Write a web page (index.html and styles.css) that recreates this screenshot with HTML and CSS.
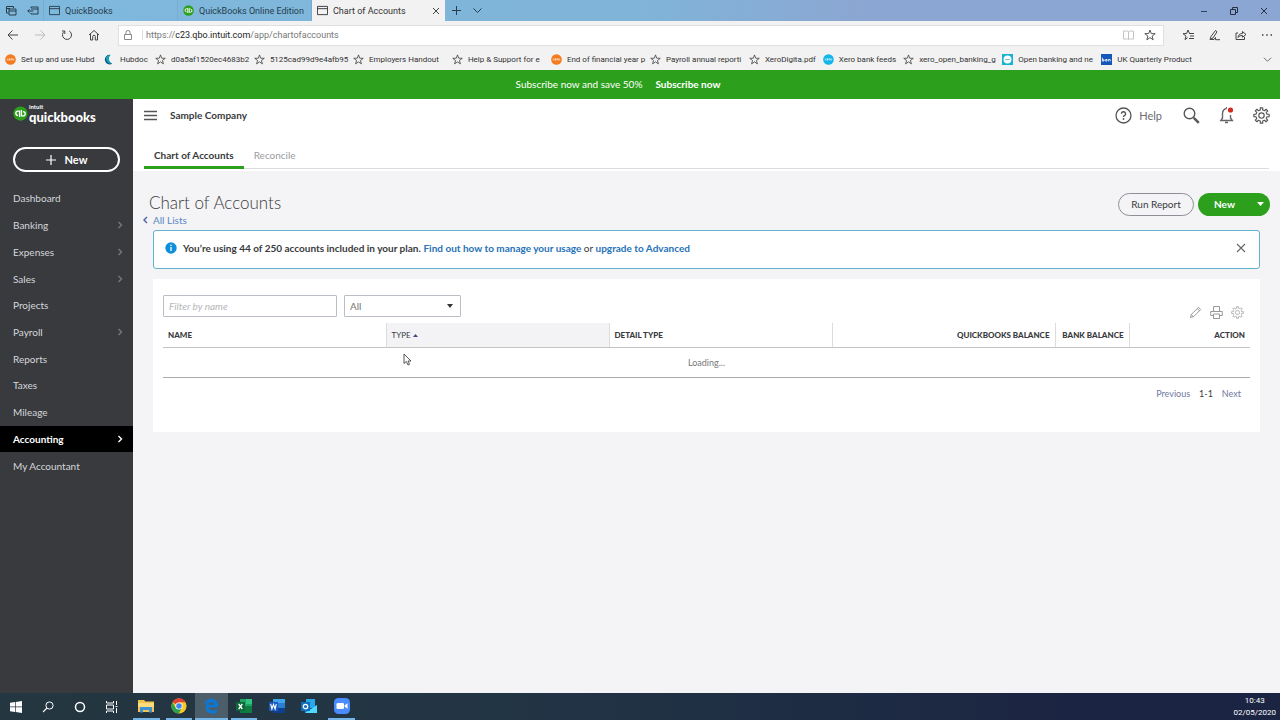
FILE: index.html
```html
<!DOCTYPE html>
<html lang="en">
<head>
    <meta charset="UTF-8">
    <title>Chart of Accounts</title>
    <link rel="stylesheet" href="styles.css">
</head>
<body>
    <!-- Shared icons -->
    <svg class="sprite" aria-hidden="true">
        <symbol id="star" viewBox="0 0 12 12"><path d="M6 1l1.3 3.6 3.9.1-3.1 2.4 1.1 3.7L6 8.6l-3.2 2.2 1.1-3.7L.8 4.7l3.9-.1z" fill="none" stroke="#444" stroke-width=".9"/></symbol>
        <symbol id="page" viewBox="0 0 12 12"><path d="M.5 1.5h11v9H.5zM.5 4h11" fill="none" stroke="currentColor"/></symbol>
        <symbol id="xero" viewBox="0 0 12 12"><circle cx="6" cy="6" r="5.8" fill="currentColor"/><path d="M2.3 5l1.4 2M3.7 5L2.3 7M4.6 6h1.6M5.6 7H4.9V5h1M7 7V5h.8M9.6 6a.8.8 0 1 1-1.6 0 .8.8 0 0 1 1.6 0" fill="none" stroke="#fff" stroke-width=".6"/></symbol>
        <symbol id="gear" viewBox="0 0 24 24"><path d="M10.3 4.2v-3h3.4v3l2.6 1.1 2.1-2.1 2.4 2.4-2.1 2.1 1.1 2.6h3v3.4h-3l-1.1 2.6 2.1 2.1-2.4 2.4-2.1-2.1-2.6 1.1v3h-3.4v-3l-2.6-1.1-2.1 2.1-2.4-2.4 2.1-2.1-1.1-2.6h-3v-3.4h3l1.1-2.6-2.1-2.1 2.4-2.4 2.1 2.1z" stroke-linejoin="round"/><circle cx="12" cy="12" r="3.8"/></symbol>
        <symbol id="chevron" viewBox="0 0 6 8"><path d="M1.5 1l3 3-3 3" fill="none" stroke="currentColor" stroke-width="1.4"/></symbol>
        <symbol id="qb" viewBox="0 0 16 16"><circle cx="8" cy="8" r="7.6" fill="#2ca01c"/><path d="M7 11.8V5.4H5.3a2.3 2.3 0 0 0 0 4.6M9 4.2v6.4h1.7a2.3 2.3 0 0 0 0-4.6" fill="none" stroke="#fff" stroke-width="1.4"/></symbol>
    </svg>

    <header class="browser">
        <div class="tab-strip">
            <div class="tab-tools">
                <svg width="11" height="10" viewBox="0 0 11 10"><path d="M2.5 7H.5V.5h7V2M.5 2.5H4M3 3h7v6H3zM3 5h7" fill="none" stroke="#263c4b"/></svg>
                <svg width="12" height="10" viewBox="0 0 12 10"><path d="M4 2V1h7v7H4V7M4 3h7M6.5 5H.8M2.5 3.3L.8 5l1.7 1.7" fill="none" stroke="#263c4b"/></svg>
            </div>
            <div class="browser-tab"><svg class="fav"><use href="#page"/></svg><span>QuickBooks</span></div>
            <div class="browser-tab"><svg class="fav"><use href="#qb"/></svg><span>QuickBooks Online Edition s</span></div>
            <div class="browser-tab current">
                <svg class="fav"><use href="#page"/></svg><span>Chart of Accounts</span>
                <button aria-label="Close tab"><svg width="8" height="8" viewBox="0 0 8 8"><path d="M1 1l6 6M7 1L1 7" stroke="#444"/></svg></button>
            </div>
            <div class="tab-actions">
                <button aria-label="New tab"><svg width="9" height="9" viewBox="0 0 9 9"><path d="M4.500 0v9M0 4.500h9" stroke="#263c4b"/></svg></button>
                <button aria-label="Tab list"><svg width="9" height="9" viewBox="0 0 9 9"><path d="M.5 2.500l4 4 4-4" fill="none" stroke="#263c4b"/></svg></button>
            </div>
            <div class="window-buttons">
                <button aria-label="Minimise"><svg width="8" height="8" viewBox="0 0 8 8"><path d="M1 4.500h6" stroke="#33405c"/></svg></button>
                <button aria-label="Restore"><svg width="8" height="8" viewBox="0 0 8 8"><path d="M.5 2.500h5v5h-5zM2.500 2V.5h5v5H6" fill="none" stroke="#263040"/></svg></button>
                <button aria-label="Close"><svg width="8" height="8" viewBox="0 0 8 8"><path d="M1 1l6 6M7 1L1 7" stroke="#263040"/></svg></button>
            </div>
        </div>

        <div class="toolbar">
            <div class="nav-buttons">
                <button aria-label="Back"><svg width="12" height="12" viewBox="0 0 12 12"><path d="M11 6H1M5.500 1.500L1 6l4.500 4.500" fill="none" stroke="#444"/></svg></button>
                <button aria-label="Forward"><svg width="12" height="12" viewBox="0 0 12 12"><path d="M1 6h10M6.500 1.500L11 6l-4.500 4.500" fill="none" stroke="#bbb"/></svg></button>
                <button aria-label="Refresh"><svg width="12" height="12" viewBox="0 0 12 12"><path d="M8.200 2A4.500 4.500 0 1 1 3.500 2.200M3.800 5V2H1" fill="none" stroke="#444"/></svg></button>
                <button aria-label="Home"><svg width="12" height="12" viewBox="0 0 12 12"><path d="M1 6l5-4.500L11 6M2.500 5v6h2.200V7.500a1.300 1.300 0 0 1 2.600 0V11h2.200V5" fill="none" stroke="#444"/></svg></button>
            </div>
            <div class="address">
                <svg width="8" height="10" viewBox="0 0 8 10"><path d="M.5 4.500h7v5h-7zM2 4.500V2.500a2 2 0 0 1 4 0v2" fill="none" stroke="#888"/></svg>
                <span class="url">https://<b>c23.qbo.intuit.com</b>/app/chartofaccounts</span>
                <svg width="11" height="10" viewBox="0 0 11 10"><path d="M.5 1h4l1 1 1-1h4v8h-4l-1 .6-1-.6h-4zM5.500 2v7.500" fill="none" stroke="#c4c4c4"/></svg>
                <svg width="12" height="12"><use href="#star"/></svg>
            </div>
            <div class="hub-buttons">
                <button aria-label="Favourites"><svg width="13" height="12" viewBox="0 0 13 12"><path d="M7.500 4.500L6 1 4.600 4.600H1l3 2.500-1 3.500 2.600-1.900M7 4.500h5M8 7h4M7 9.500h5" fill="none" stroke="#444"/></svg></button>
                <button aria-label="Notes"><svg width="12" height="12" viewBox="0 0 12 12"><path d="M1 10.500l1-3L6.500 1.500 8 2.800 4 9zM1 10.500h4l1.500-2v2.200H11" fill="none" stroke="#444"/></svg></button>
                <button aria-label="Share"><svg width="12" height="12" viewBox="0 0 12 12"><path d="M3 4H1v6.500h8.500V8M3 8.500c.3-2.500 1.500-4 4.500-4v-2L11 5.500 7.500 8.300V6.500C5.500 6.500 4 7 3 8.500z" fill="none" stroke="#444"/></svg></button>
                <button aria-label="More"><svg width="12" height="12" viewBox="0 0 12 12"><path d="M1 6h1.400M5.300 6h1.400M9.600 6H11" stroke="#333" stroke-width="1.300"/></svg></button>
            </div>
        </div>

        <nav class="favourites">
            <a class="long" href="#"><svg class="orange"><use href="#xero"/></svg><span>Set up and use Hubd</span></a>
            <a href="#"><svg viewBox="0 0 12 12"><path d="M7 1a5.200 5.200 0 1 0 2 9.500A5.500 5.500 0 0 1 7 1z" fill="#0b4f78"/><path d="M2 4c0 4 3 7.500 7 6.500A5.500 5.500 0 0 1 7 1C4.500 1 2.500 2 2 4z" fill="#13a5b8"/></svg><span>Hubdoc</span></a>
            <a class="long" href="#"><svg><use href="#star"/></svg><span>d0a5af1520ec4683b2</span></a>
            <a class="long" href="#"><svg><use href="#star"/></svg><span>5125cad99d9e4afb95</span></a>
            <a class="long" href="#"><svg><use href="#star"/></svg><span>Employers Handout</span></a>
            <a class="long" href="#"><svg><use href="#star"/></svg><span>Help &amp; Support for e</span></a>
            <a class="long" href="#"><svg class="orange"><use href="#xero"/></svg><span>End of financial year p</span></a>
            <a class="long" href="#"><svg><use href="#star"/></svg><span>Payroll annual reporti</span></a>
            <a href="#"><svg><use href="#star"/></svg><span>XeroDigita.pdf</span></a>
            <a href="#"><svg class="blue"><use href="#xero"/></svg><span>Xero bank feeds</span></a>
            <a class="long" href="#"><svg><use href="#star"/></svg><span>xero_open_banking_g</span></a>
            <a class="long" href="#"><svg viewBox="0 0 12 12"><path d="M0 0h12v12H0z" fill="#19b3d0"/><circle cx="6" cy="6" r="4.300" fill="#fff"/><path d="M3.500 6h5" stroke="#7bc" stroke-width="1.200"/></svg><span>Open banking and ne</span></a>
            <a href="#"><svg viewBox="0 0 12 12"><path d="M0 0h12v12H0z" fill="#1557b8"/><path d="M1.500 4v4M1.700 6.200h1.600v1.500H1.700M5 6h1.500v1.700H5zM8 8V6h2v2" fill="none" stroke="#fff" stroke-width=".9"/></svg><span>UK Quarterly Product</span></a>
            <button class="more" aria-label="More favourites"><svg viewBox="0 0 12 12"><path d="M2 4l4 4 4-4" fill="none" stroke="#666"/></svg></button>
        </nav>
    </header>

    <div class="promo">
        <span>Subscribe now and save 50%</span>
        <a href="#">Subscribe now</a>
    </div>

    <div class="app">
        <aside class="sidebar">
            <div class="logo">
                <svg width="15" height="15"><use href="#qb"/></svg>
                <div class="wordmark"><small>intuit</small><strong>quickbooks</strong></div>
            </div>
            <button class="create"><svg width="10" height="10" viewBox="0 0 10 10"><path d="M5 0v10M0 5h10" stroke="#fff" stroke-width="1.200"/></svg>New</button>
            <ul class="menu">
                <li><a href="#">Dashboard</a></li>
                <li><a href="#">Banking<svg><use href="#chevron"/></svg></a></li>
                <li><a href="#">Expenses<svg><use href="#chevron"/></svg></a></li>
                <li><a href="#">Sales<svg><use href="#chevron"/></svg></a></li>
                <li><a href="#">Projects</a></li>
                <li><a href="#">Payroll<svg><use href="#chevron"/></svg></a></li>
                <li><a href="#">Reports</a></li>
                <li><a href="#">Taxes</a></li>
                <li><a href="#">Mileage</a></li>
                <li><a class="active" href="#">Accounting<svg><use href="#chevron"/></svg></a></li>
                <li><a href="#">My Accountant</a></li>
            </ul>
        </aside>

        <main>
            <div class="company-bar">
                <button aria-label="Toggle menu"><svg width="13" height="11" viewBox="0 0 13 11"><path d="M0 1.500h13M0 5.500h13M0 9.500h13" stroke="#555" stroke-width="1.300"/></svg></button>
                <span class="company">Sample Company</span>
                <div class="company-tools">
                    <a class="help" href="#"><svg width="17" height="17" viewBox="0 0 17 17"><circle cx="8.500" cy="8.500" r="7.500" fill="none" stroke="#555" stroke-width="1.300"/><path d="M6.400 6.800a2.100 2.100 0 1 1 3 1.900q-.9.500-.9 1.400" fill="none" stroke="#555" stroke-width="1.400"/><circle cx="8.500" cy="12" r=".9" fill="#555"/></svg>Help</a>
                    <button aria-label="Search"><svg width="17" height="17" viewBox="0 0 17 17"><circle cx="6.500" cy="6.500" r="5.300" fill="none" stroke="#555" stroke-width="1.400"/><path d="M10.800 10.800l5 5" stroke="#555" stroke-width="2.400"/></svg></button>
                    <button aria-label="Notifications"><svg width="17" height="18" viewBox="0 0 17 18"><path d="M8.500 2.500C5.800 3 4.500 5 4.500 8v4L2.800 14.500h11.500L12.500 12V9M7 16.500h3" fill="none" stroke="#666" stroke-width="1.400"/><path d="M8.500 2.500V1" stroke="#666"/><circle cx="12.500" cy="4" r="2.600" fill="#d52b1e"/></svg></button>
                    <button aria-label="Settings"><svg class="gear dark" width="17" height="17"><use href="#gear"/></svg></button>
                </div>
            </div>
            <nav class="page-tabs">
                <a class="selected" href="#">Chart of Accounts</a>
                <a href="#">Reconcile</a>
            </nav>

            <div class="page">
                <div class="page-head">
                    <div>
                        <h1>Chart of Accounts</h1>
                        <a class="back" href="#"><svg width="5" height="8" viewBox="0 0 5 8"><path d="M4 1L1 4l3 3" fill="none" stroke="#5068a8" stroke-width="1.500"/></svg>All Lists</a>
                    </div>
                    <div class="page-actions">
                        <button class="run">Run Report</button>
                        <button class="new">New<svg width="7" height="4" viewBox="0 0 7 4"><path d="M0 0h7L3.500 4z" fill="#fff"/></svg></button>
                    </div>
                </div>

                <div class="notice">
                    <svg width="12" height="12" viewBox="0 0 12 12"><circle cx="6" cy="6" r="5.700" fill="#0d8fdb"/><path d="M6 5v4" stroke="#fff" stroke-width="1.300"/><circle cx="6" cy="3.200" r=".8" fill="#fff"/></svg>
                    <p><b>You’re using 44 of 250 accounts included in your plan.</b> <a href="#">Find out how to manage your usage</a> or <a href="#">upgrade to Advanced</a></p>
                    <button aria-label="Dismiss"><svg width="10" height="10" viewBox="0 0 10 10"><path d="M1 1l8 8M9 1L1 9" stroke="#666" stroke-width="1.100"/></svg></button>
                </div>

                <section class="panel">
                    <div class="filters">
                        <input type="text" aria-label="Filter by name" placeholder="Filter by name">
                        <div class="select">
                            <select aria-label="Account filter"><option>All</option></select>
                            <svg width="6" height="4" viewBox="0 0 6 4"><path d="M0 0h6L3 4z" fill="#333"/></svg>
                        </div>
                        <div class="table-tools">
                            <button aria-label="Edit"><svg width="13" height="13" viewBox="0 0 13 13"><path d="M1.500 11.500l.8-3L9.500 1.300l2.200 2.200-7.200 7.200zM8.300 2.500l2.200 2.200M2.300 8.500l2.200 2.200" fill="none" stroke="#999"/></svg></button>
                            <button aria-label="Print"><svg width="13" height="13" viewBox="0 0 13 13"><path d="M3.500 5.500v-5h6v5M3 9.500H.7v-4h11.600v4H10M3.500 8h6v4.500h-6z" fill="none" stroke="#999"/></svg></button>
                            <button aria-label="Table settings"><svg class="gear" width="13" height="13"><use href="#gear"/></svg></button>
                        </div>
                    </div>
                    <table>
                        <thead>
                            <tr>
                                <th>Name</th>
                                <th class="sorted">Type <svg width="5" height="3" viewBox="0 0 5 3"><path d="M0 3h5L2.500 0z" fill="#448"/></svg></th>
                                <th>Detail type</th>
                                <th class="num">QuickBooks balance</th>
                                <th class="num bank">Bank balance</th>
                                <th class="num action">Action</th>
                            </tr>
                        </thead>
                        <tbody>
                            <tr><td colspan="6">Loading...</td></tr>
                        </tbody>
                    </table>
                    <div class="pager"><a href="#">Previous</a><span>1-1</span><a href="#">Next</a></div>
                </section>
            </div>
        </main>
    </div>

    <footer class="taskbar">
        <div class="system">
            <button aria-label="Start"><svg width="12" height="12" viewBox="0 0 12 12"><path d="M0 1.800l5-.7v4.500H0zM5.700 1L12 0v5.600H5.700zM0 6.300h5v4.600l-5-.7zM5.700 6.300H12V12l-6.300-.9z" fill="#fff"/></svg></button>
            <button aria-label="Search"><svg width="12" height="12" viewBox="0 0 12 12"><circle cx="7.500" cy="4.500" r="3.600" fill="none" stroke="#fff"/><path d="M5 7L1 11" stroke="#fff" stroke-width="1.100"/></svg></button>
            <button aria-label="Cortana"><svg width="12" height="12" viewBox="0 0 12 12"><circle cx="6" cy="6" r="4.500" fill="none" stroke="#fff" stroke-width="1.500"/></svg></button>
            <button aria-label="Task view"><svg width="12" height="12" viewBox="0 0 12 12"><path d="M.5 0v2h7V0M.5 12v-2h7v2M.5 4h7v4h-7zM10.500 0v4M10.500 7v5M9.500 5.500h2" fill="none" stroke="#fff"/></svg></button>
        </div>
        <div class="pinned">
            <button class="open" aria-label="File Explorer"><svg viewBox="0 0 16 16"><path d="M0 2h6l1.500 1.500H16V14H0z" fill="#f3c44b"/><path d="M0 5h16v4H0z" fill="#fbdc7d"/><path d="M2 14.500V9h12v5.500h-3V12H5v2.500z" fill="#3f8fd6"/></svg></button>
            <button class="open" aria-label="Chrome"><svg viewBox="0 0 16 16"><circle cx="8" cy="8" r="7.600" fill="#f7c927"/><path d="M8 8L1.400 4.200A7.600 7.600 0 0 1 14.600 4.200H8z" fill="#e24335"/><path d="M1.400 4.200A7.600 7.600 0 0 0 7.600 15.600L11 9.700 8 8 4.700 9.800z" fill="#2da14e"/><circle cx="8" cy="8" r="3.600" fill="#fff"/><circle cx="8" cy="8" r="2.800" fill="#4386ea"/></svg></button>
            <button class="focused" aria-label="Edge"><svg viewBox="0 0 16 16"><path d="M1 7.500C1.500 3 4.500.8 8.200.8c4.500 0 6.800 3 6.800 6.500v1.900H5.400c.2 3.500 5.200 4.200 8.400 2.200v3.300C8.500 17 2.500 14.800 2.600 9.200 2.700 7 4 5.400 5.500 4.700 3.500 5 2 6 1 7.500zm4.500-.8h5.200c0-3.200-4.700-3-5.200 0z" fill="#0b78d7"/></svg></button>
            <button class="open" aria-label="Excel"><svg viewBox="0 0 16 16"><path d="M4 1h12v14H4z" fill="#21a366"/><path d="M10 1h6v5h-6z" fill="#33c481"/><path d="M4 8h12v7H4z" fill="#107c41"/><path d="M0 4h9v9H0z" fill="#0b6a37"/><path d="M2.700 6l3.600 5M6.300 6l-3.600 5" stroke="#fff" stroke-width="1.300"/></svg></button>
            <button aria-label="Word"><svg viewBox="0 0 16 16"><path d="M4 1h12v14H4z" fill="#2b7cd3"/><path d="M4 1h12v4H4z" fill="#41a5ee"/><path d="M4 10h12v5H4z" fill="#103f91"/><path d="M0 4h9v9H0z" fill="#185abd"/><path d="M1.700 6l1.200 5 1.600-4.500L6.100 11l1.200-5" fill="none" stroke="#fff" stroke-width="1.100"/></svg></button>
            <button aria-label="Outlook"><svg viewBox="0 0 16 16"><path d="M5 1h9v9H5z" fill="#28a8ea"/><path d="M4 7l6 4 6-4v8H4z" fill="#1490df"/><path d="M4 15l12-8v8z" fill="#50d9ff"/><path d="M0 4h9v9H0z" fill="#0f6cbd"/><circle cx="4.500" cy="8.500" r="2.200" fill="none" stroke="#fff" stroke-width="1.300"/></svg></button>
            <button class="open" aria-label="Zoom"><svg viewBox="0 0 16 16"><rect width="16" height="16" rx="4.500" fill="#4a8cff"/><rect x="2.500" y="5" width="7.500" height="6" rx="1.300" fill="#fff"/><path d="M10.700 7.300L13.500 5.300v5.400l-2.800-2z" fill="#fff"/></svg></button>
        </div>
        <div class="clock"><span>10:43</span><span>02/05/2020</span></div>
    </footer>

    <svg class="cursor" width="9" height="13" viewBox="0 0 9 13"><path d="M1 1v9.500l2.300-2L5 12l1.500-.7L5 8h3z" fill="#fff" stroke="#444" stroke-width=".9"/></svg>
</body>
</html>
```

FILE: styles.css
```css
* {
    box-sizing: border-box;
}

body {
    margin: 0;
    height: 100vh;
    display: flex;
    flex-direction: column;
    overflow: hidden;
    font-family: Lato, sans-serif;
    font-size: 10px;
    color: #393a3d;
    background: #f4f4f6;
}

a {
    color: inherit;
    text-decoration: none;
}

button {
    display: flex;
    align-items: center;
    justify-content: center;
    padding: 0;
    border: none;
    background: none;
    font: inherit;
    color: inherit;
    cursor: pointer;
}

svg {
    flex: none;
}

.sprite {
    position: absolute;
    width: 0;
    height: 0;
}

/* Browser window */
.browser {
    font-family: Roboto, "Noto Sans", sans-serif;
    font-size: 9px;
    color: #333;
    background: #f2f2f2;
}

.tab-strip {
    display: flex;
    height: 21px;
    background: linear-gradient(to right, #7fb9de, #80b4d8 50%, #8ba6d2 68%, #8ba6d2);
}

.tab-tools {
    display: flex;
    align-items: center;
    gap: 10px;
    width: 43px;
    padding-left: 6px;
}

.browser-tab {
    display: flex;
    align-items: center;
    gap: 5px;
    width: 134px;
    padding: 0 5px;
    border-left: 1px solid #79add0;
    color: #263c4b;
    white-space: nowrap;
}

.browser-tab span {
    flex: 1;
    overflow: hidden;
}

.browser-tab.current {
    background: #f2f2f2;
    color: #333;
}

.fav {
    width: 11px;
    height: 11px;
}

.tab-actions {
    display: flex;
    gap: 12px;
    padding-left: 7px;
}

.window-buttons {
    display: flex;
    gap: 22px;
    margin-left: auto;
    padding-right: 12px;
}

.toolbar {
    display: flex;
    align-items: center;
    height: 28px;
    padding: 0 7px;
}

.nav-buttons {
    display: flex;
    gap: 15px;
    width: 111px;
}

.address {
    flex: 1;
    display: flex;
    align-items: center;
    gap: 10px;
    height: 21px;
    padding: 0 7px 0 5px;
    background: #fff;
    border: 1px solid #e0e0e0;
}

.url {
    flex: 1;
    padding-left: 3px;
    border-left: 1px solid #ddd;
    color: #777;
}

.url b {
    font-weight: normal;
    color: #222;
}

.hub-buttons {
    display: flex;
    gap: 14px;
    padding-left: 18px;
}

.favourites {
    display: flex;
    align-items: center;
    gap: 7px;
    height: 21px;
    padding: 0 7px 0 5px;
    font-size: 8px;
}

.favourites a {
    display: flex;
    align-items: center;
    gap: 5px;
    white-space: nowrap;
}

.favourites .long span {
    width: 76px;
}

.favourites svg {
    width: 11px;
    height: 11px;
}

.orange {
    color: #f47b20;
}

.blue {
    color: #13b5ea;
}

.more {
    margin-left: auto;
}

/* QuickBooks */
.promo {
    display: flex;
    align-items: center;
    justify-content: center;
    gap: 13px;
    height: 29px;
    padding: 0 44px 2px 0;
    background: #2ca01c;
    color: #fff;
}

.promo a {
    font-weight: bold;
}

.app {
    flex: 1;
    display: flex;
    min-height: 0;
}

.sidebar {
    width: 133px;
    background: #393a3d;
    color: #d4d7dc;
}

.logo {
    display: flex;
    align-items: center;
    gap: 1px;
    padding: 4px 13px 0;
    color: #fff;
}

.wordmark {
    display: flex;
    flex-direction: column;
}

.wordmark small {
    font-size: 6px;
    font-weight: bold;
    line-height: 7px;
}

.wordmark strong {
    font-size: 13px;
    font-weight: 900;
    line-height: 14px;
}

.create {
    gap: 9px;
    width: 107px;
    height: 25px;
    margin: 23px 13px 13px;
    border: 2px solid #fff;
    border-radius: 13px;
    color: #fff;
    font-weight: bold;
    font-size: 11px;
}

.menu {
    display: grid;
    grid-auto-rows: 1fr;
    height: 294px;
    margin: 0;
    padding: 0;
    list-style: none;
}

.menu a {
    display: flex;
    align-items: center;
    justify-content: space-between;
    height: 100%;
    padding: 0 10px 0 13px;
}

.menu svg {
    width: 6px;
    height: 8px;
    color: #77797e;
}

.menu .active {
    background: #000;
    color: #fff;
    font-weight: bold;
}

.menu .active svg {
    color: #fff;
}

main {
    flex: 1;
    min-width: 0;
}

.company-bar {
    display: flex;
    align-items: center;
    height: 32px;
    padding: 0 10px 0 11px;
    background: #fff;
}

.company {
    padding-left: 13px;
    font-weight: bold;
}

.company-tools {
    display: flex;
    align-items: center;
    gap: 18px;
    margin-left: auto;
    color: #6b6c72;
    font-size: 11px;
}

.help {
    display: flex;
    align-items: center;
    gap: 7px;
    padding-right: 3px;
}

.gear {
    fill: none;
    stroke: #aaa;
    stroke-width: 1.6px;
}

.gear.dark {
    stroke: #555;
}

.page-tabs {
    display: flex;
    height: 40px;
    padding: 12px 11px 2px;
    background: #fff;
    color: #9a9ba0;
}

.page-tabs a {
    padding: 6px 10px 0;
    border-bottom: 1px solid #dcdce0;
}

.page-tabs::after {
    content: "";
    flex: 1;
    border-bottom: 1px solid #dcdce0;
}

.page-tabs .selected {
    border-bottom: 3px solid #2ca01c;
    color: #393a3d;
    font-weight: bold;
}

.page {
    padding: 20px 20px 0;
}

.page-head {
    display: flex;
    justify-content: space-between;
    margin: 0 -10px 5px;
}

h1 {
    margin: 0 6px;
    font-size: 17px;
    font-weight: 300;
    line-height: 24px;
}

.back {
    display: flex;
    align-items: center;
    gap: 5px;
    line-height: 10px;
    color: #5a86c5;
}

.page-actions {
    display: flex;
    align-items: center;
    gap: 4px;
    height: 26px;
}

.page-actions button {
    height: 23px;
    border-radius: 12px;
}

.run {
    width: 76px;
    border: 1px solid #8d9096;
}

.new {
    width: 72px;
    gap: 22px;
    padding-left: 10px;
    background: #2ca01c;
    color: #fff;
    font-weight: bold;
}

.notice {
    display: flex;
    align-items: center;
    gap: 6px;
    height: 39px;
    padding: 0 13px 4px 11px;
    border: 1px solid #62b1cf;
    border-radius: 3px;
    background: #fff;
}

.notice p {
    flex: 1;
    margin: 0;
}

.notice a {
    color: #2672b8;
    font-weight: bold;
}

.panel {
    height: 153px;
    margin-top: 10px;
    padding: 16px 10px;
    background: #fff;
}

.filters {
    display: flex;
    gap: 7px;
    height: 28px;
}

.filters input,
.filters select {
    height: 22px;
    padding: 0 5px;
    border: 1px solid #babec5;
    border-radius: 1px;
    background: #fff;
    font: inherit;
    color: #777;
}

.filters input {
    width: 174px;
}

.filters input::placeholder {
    color: #b5b6ba;
    font-style: italic;
}

.select {
    position: relative;
}

.select select {
    width: 117px;
    appearance: none;
}

.select svg {
    position: absolute;
    top: 9px;
    right: 8px;
}

.table-tools {
    display: flex;
    align-items: flex-end;
    gap: 8px;
    margin-left: auto;
    padding: 0 6px 4px;
}

table {
    width: 100%;
    table-layout: fixed;
    border-collapse: collapse;
    font-size: 9px;
    border-bottom: 1px solid #aaa;
}

th {
    height: 24px;
    padding: 0 5px;
    border-bottom: 1px solid #c4c4c4;
    border-left: 1px solid #dcdcdc;
    text-align: left;
    text-transform: uppercase;
    white-space: nowrap;
    font-size: 8px;
    font-weight: 900;
}

th:first-child,
th:last-child {
    border-left: none;
}

.sorted {
    background: #f3f3f5;
    font-weight: normal;
}

.sorted svg {
    vertical-align: middle;
}

.num {
    text-align: right;
}

.bank {
    width: 74px;
    border-right: 1px solid #dcdcdc;
}

.action {
    width: 121px;
}

td {
    height: 30px;
    padding: 0;
    text-align: center;
    color: #777;
}

.pager {
    display: flex;
    justify-content: flex-end;
    gap: 9px;
    padding: 10px 9px 0;
    font-size: 9px;
}

.pager a {
    color: #7078a0;
}

/* Windows taskbar */
.taskbar {
    display: flex;
    height: 27px;
    background: linear-gradient(to right, #24363f, #223545 40%, #1b2442 85%);
    color: #fff;
    font-family: Roboto, "Noto Sans", sans-serif;
    font-size: 8px;
}

.system {
    display: flex;
    width: 130px;
}

.system button {
    width: 32px;
}

.pinned {
    display: grid;
    grid-template-columns: repeat(7, 1fr);
    width: 228px;
}

.pinned button {
    border-bottom: 2px solid transparent;
}

.pinned .open {
    margin: 0 3px;
    border-color: #76b5e8;
}

.pinned .focused {
    background: #4c5e69;
    border-color: #76b5e8;
}

.pinned svg {
    width: 16px;
    height: 16px;
}

.clock {
    display: flex;
    flex-direction: column;
    align-items: center;
    justify-content: center;
    margin-left: auto;
    padding-right: 4px;
    line-height: 12px;
}

.cursor {
    position: absolute;
    left: 403px;
    top: 353px;
}
```
